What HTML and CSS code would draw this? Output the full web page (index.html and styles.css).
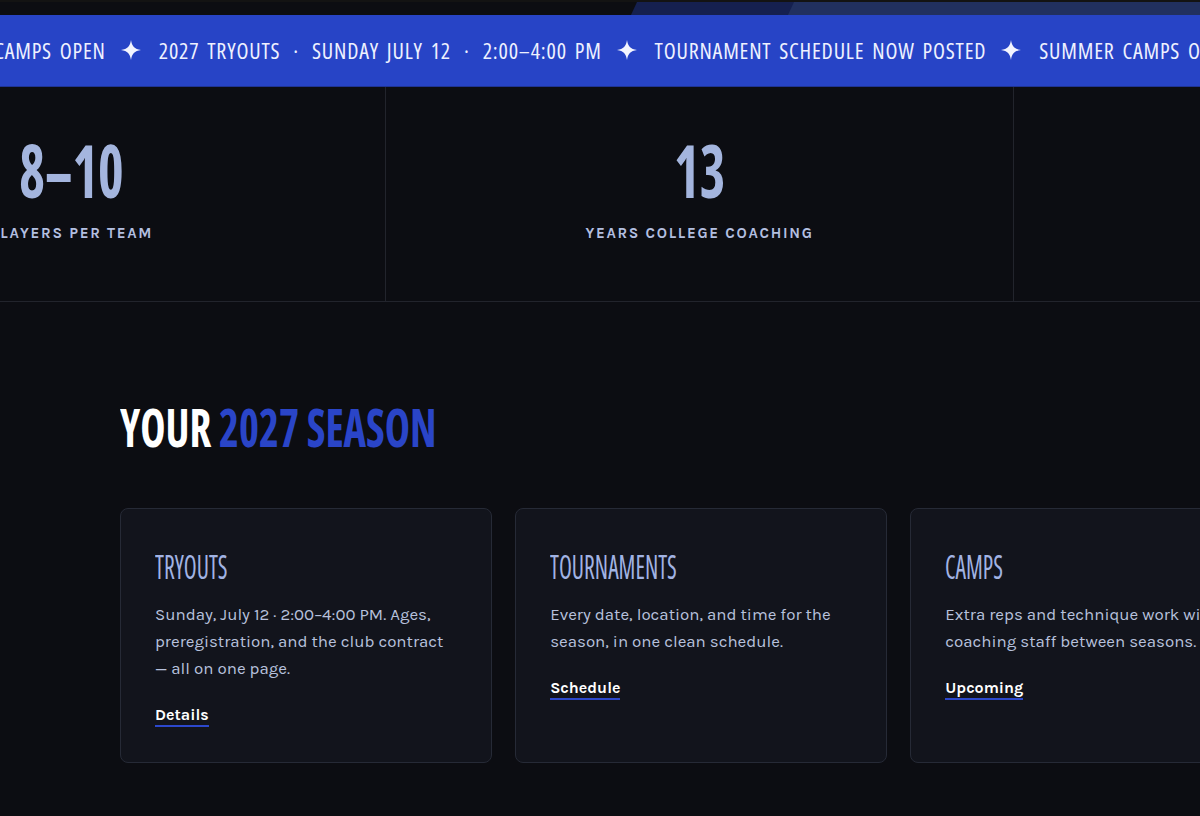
FILE: index.html
```html
<!DOCTYPE html>
<html lang="en">
<head>
    <meta charset="UTF-8">
    <meta name="viewport" content="width=device-width, initial-scale=1.0">
    <title>2027 Season</title>
    <link rel="stylesheet" href="styles.css">
</head>
<body>
    <div class="hero-edge">
        <div class="hero-edge-gap"></div>
        <div class="hero-edge-panel panel-dark"></div>
        <div class="hero-edge-panel panel-light"></div>
    </div>

    <div class="ticker">
        <div class="ticker-track">
            <span class="ticker-item">SUMMER CAMPS OPEN</span>
            <svg class="ticker-star" viewBox="0 0 20 20"><path d="M10 0C10.8 6 13.5 9.2 20 10C13.5 10.8 10.8 14 10 20C9.2 14 6.5 10.8 0 10C6.5 9.2 9.2 6 10 0Z"/></svg>
            <span class="ticker-item">2027 TRYOUTS<span class="dot">·</span>SUNDAY JULY 12<span class="dot">·</span>2:00–4:00 PM</span>
            <svg class="ticker-star" viewBox="0 0 20 20"><path d="M10 0C10.8 6 13.5 9.2 20 10C13.5 10.8 10.8 14 10 20C9.2 14 6.5 10.8 0 10C6.5 9.2 9.2 6 10 0Z"/></svg>
            <span class="ticker-item">TOURNAMENT SCHEDULE NOW POSTED</span>
            <svg class="ticker-star" viewBox="0 0 20 20"><path d="M10 0C10.8 6 13.5 9.2 20 10C13.5 10.8 10.8 14 10 20C9.2 14 6.5 10.8 0 10C6.5 9.2 9.2 6 10 0Z"/></svg>
            <span class="ticker-item">SUMMER CAMPS OPEN</span>
            <svg class="ticker-star" viewBox="0 0 20 20"><path d="M10 0C10.8 6 13.5 9.2 20 10C13.5 10.8 10.8 14 10 20C9.2 14 6.5 10.8 0 10C6.5 9.2 9.2 6 10 0Z"/></svg>
            <span class="ticker-item">2027 TRYOUTS<span class="dot">·</span>SUNDAY JULY 12<span class="dot">·</span>2:00–4:00 PM</span>
        </div>
    </div>

    <div class="stats">
        <div class="stat">
            <span class="stat-value">8–10</span>
            <span class="stat-label">PLAYERS PER TEAM</span>
        </div>
        <div class="stat">
            <span class="stat-value">13</span>
            <span class="stat-label">YEARS COLLEGE COACHING</span>
        </div>
        <div class="stat">
            <span class="stat-value">U12</span>
            <span class="stat-label">THROUGH HIGH SCHOOL</span>
        </div>
    </div>

    <section class="season">
        <h2 class="season-title"><span class="title-white">YOUR</span> 2027 SEASON</h2>

        <div class="cards">
            <div class="card">
                <h3 class="card-title">TRYOUTS</h3>
                <p class="card-text">Sunday, July 12 · 2:00–4:00 PM. Ages, preregistration, and the club contract —&nbsp;all on one page.</p>
                <a class="card-link" href="#">Details</a>
            </div>
            <div class="card">
                <h3 class="card-title">TOURNAMENTS</h3>
                <p class="card-text">Every date, location, and time for the season, in one clean schedule.</p>
                <a class="card-link" href="#">Schedule</a>
            </div>
            <div class="card">
                <h3 class="card-title">CAMPS</h3>
                <p class="card-text">Extra reps and technique work with the coaching staff between seasons.</p>
                <a class="card-link" href="#">Upcoming</a>
            </div>
        </div>
    </section>
</body>
</html>
```
FILE: styles.css
```css
body {
    margin: 0;
    background-color: #0c0d12;
    color: #b7c1dc;
    font-family: 'Karla', 'Inter', sans-serif;
    overflow: hidden;
}

/* Bottom edge of the hero panels */
.hero-edge {
    display: flex;
    height: 13px;
    border-top: 2px solid #131313;
    overflow: hidden;
}

.hero-edge-gap {
    width: 634px;
    flex-shrink: 0;
}

.hero-edge-panel {
    transform: skewX(-25deg);
    margin-right: -3px;
}

.panel-dark {
    width: 160px;
    background: #15204f;
}

.panel-light {
    flex: 1;
    margin-right: -20px;
    background: #21305f;
}

/* Ticker */
.ticker {
    height: 72px;
    padding-bottom: 2px;
    box-sizing: border-box;
    background: #2744c6;
    border-bottom: 1px solid #1f3494;
    display: flex;
    align-items: center;
    overflow: hidden;
}

.ticker-track {
    display: flex;
    align-items: center;
    white-space: nowrap;
    transform: translateX(-89px);
}

.ticker-item {
    font-family: 'Open Sans', sans-serif;
    font-stretch: 75%;
    font-weight: 500;
    font-size: 22px;
    letter-spacing: 0.8px;
    word-spacing: 3px;
    color: #eef1ff;
}

.ticker-item .dot {
    margin: 0 13px;
}

.ticker-star {
    width: 20px;
    height: 20px;
    margin: 0 18px 0 15px;
    fill: #f3f5ff;
    flex-shrink: 0;
}

/* Stats */
.stats {
    display: grid;
    grid-template-columns: repeat(3, 628px);
    margin-left: -242px;
    border-bottom: 1px solid #22242c;
}

.stat {
    display: flex;
    flex-direction: column;
    align-items: center;
    padding: 46px 0 58px;
    border-right: 1px solid #22242c;
}

.stat-value {
    display: inline-block;
    font-family: 'Open Sans', sans-serif;
    font-stretch: 75%;
    font-weight: 700;
    font-size: 74px;
    line-height: 1;
    color: #a4b5de;
    transform: scaleX(0.74);
}

.stat-label {
    margin-top: 16px;
    font-size: 15px;
    line-height: 20px;
    font-weight: 700;
    letter-spacing: 1.7px;
    color: #b3bfe0;
}

/* Season cards */
.season {
    padding: 97px 0 60px 120px;
}

.season-title {
    display: inline-block;
    margin: 0;
    font-family: 'Open Sans', sans-serif;
    font-stretch: 75%;
    font-weight: 700;
    font-size: 54px;
    line-height: 1;
    color: #2a45c8;
    transform: scaleX(0.79);
    transform-origin: left;
}

.title-white {
    color: #fff;
}

.cards {
    display: grid;
    grid-template-columns: repeat(3, 1fr);
    gap: 23.5px;
    width: 1162px;
    margin-top: 55px;
}

.card {
    background: #12141c;
    border: 1px solid #262a36;
    border-radius: 8px;
    padding: 40px 30px 35px 34px;
}

.card-title {
    display: inline-block;
    margin: 0;
    font-family: 'Open Sans', sans-serif;
    font-stretch: 75%;
    font-weight: 500;
    font-size: 32px;
    line-height: 1.1;
    color: #a1b3e3;
    transform: scaleX(0.74);
    transform-origin: left;
}

.card-text {
    margin: 17px 0 0;
    font-size: 16.9px;
    line-height: 27px;
}

.card-link {
    display: inline-block;
    margin-top: 23px;
    font-size: 16px;
    font-weight: 700;
    line-height: 20px;
    color: #fff;
    text-decoration: none;
    border-bottom: 2px solid #2c48cc;
}
```
